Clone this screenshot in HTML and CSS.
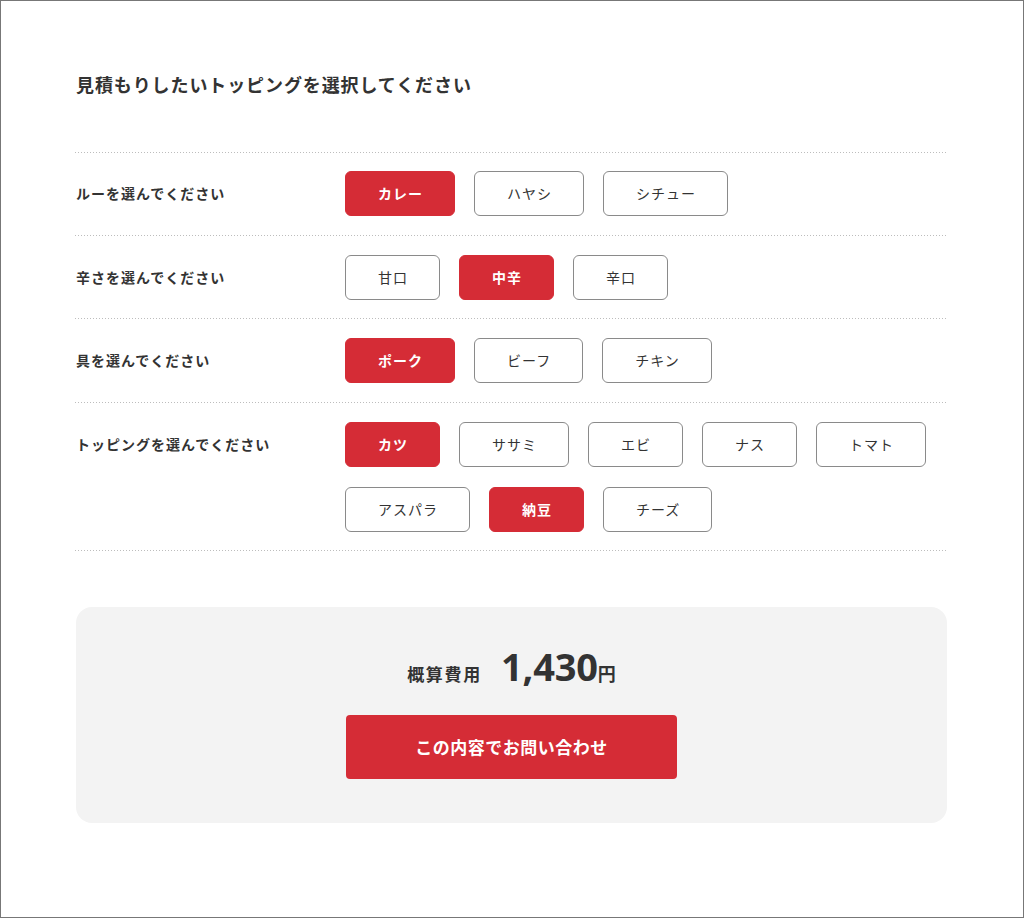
FILE: index.html
```html
<!DOCTYPE html>
<html lang="ja">
<head>
    <meta charset="UTF-8">
    <meta name="viewport" content="width=device-width, initial-scale=1.0">
    <title>トッピング見積もり</title>
    <link rel="stylesheet" href="styles.css">
</head>
<body>

    <div class="page">
        <div class="estimate">

            <h2 class="estimate-title">見積もりしたいトッピングを選択してください</h2>

            <div class="options">
                <div class="row">
                    <div class="row-label">ルーを選んでください</div>
                    <div class="choices">
                        <span class="choice is-on">カレー</span>
                        <span class="choice">ハヤシ</span>
                        <span class="choice">シチュー</span>
                    </div>
                </div>

                <div class="row">
                    <div class="row-label">辛さを選んでください</div>
                    <div class="choices">
                        <span class="choice">甘口</span>
                        <span class="choice is-on">中辛</span>
                        <span class="choice">辛口</span>
                    </div>
                </div>

                <div class="row">
                    <div class="row-label">具を選んでください</div>
                    <div class="choices">
                        <span class="choice is-on">ポーク</span>
                        <span class="choice">ビーフ</span>
                        <span class="choice">チキン</span>
                    </div>
                </div>

                <div class="row">
                    <div class="row-label">トッピングを選んでください</div>
                    <div class="choices">
                        <span class="choice is-on">カツ</span>
                        <span class="choice">ササミ</span>
                        <span class="choice">エビ</span>
                        <span class="choice">ナス</span>
                        <span class="choice">トマト</span>
                        <span class="choice">アスパラ</span>
                        <span class="choice is-on">納豆</span>
                        <span class="choice">チーズ</span>
                    </div>
                </div>
            </div>

            <div class="total">
                <p class="total-price">
                    <span class="total-label">概算費用</span>
                    <span class="total-num">1,430</span><span class="total-yen">円</span>
                </p>
                <a class="total-btn" href="#">この内容でお問い合わせ</a>
            </div>

        </div>
    </div>

</body>
</html>
```

FILE: styles.css
```css
*{
    margin : 0;
    padding: 0;
    box-sizing: border-box;
}

body{
    font-family: "Noto Sans CJK JP", "Noto Sans", sans-serif;
    color: #333;
    background: #fff;
}

/* 画面の外枠 */
.page{
    border: 1px solid #777;
    height: 918px;
}

.estimate{
    width: 872px;
    margin-left: 74px;
    padding-top: 70px;
}

.estimate-title{
    font-size: 18px;
    font-weight: 700;
    letter-spacing: 0.05em;
    line-height: 27px;
    padding-left: 1px;
    margin-bottom: 54px;
}

/* 点線の区切り */
.options{
    background-image: linear-gradient(to right, #bdbdbd 1px, transparent 1px);
    background-size: 3px 1px;
    background-repeat: repeat-x;
    width: 871px;
}

.row{
    display: flex;
    align-items: flex-start;
    padding: 19px 0 19.5px;
    background-image: linear-gradient(to right, #bdbdbd 1px, transparent 1px);
    background-size: 3px 1px;
    background-repeat: repeat-x;
    background-position: left bottom;
}

.row-label{
    width: 270px;
    flex-shrink: 0;
    padding-left: 1px;
    font-size: 14px;
    font-weight: 700;
    letter-spacing: 1px;
    line-height: 45px;
}

.choices{
    display: flex;
    flex-wrap: wrap;
    gap: 20px 19px;
    width: 600px;
}

.choice{
    display: inline-block;
    height: 45px;
    line-height: 43px;
    padding: 0 31px;
    border: 1px solid #8a8a8a;
    border-radius: 6px;
    font-size: 14px;
    letter-spacing: 1px;
    text-indent: 1px;
    text-align: center;
    color: #333;
    background: #fff;
}

.choice.is-on{
    background: #d52c36;
    border-color: #d52c36;
    color: #fff;
    font-weight: 700;
}

/* 見積もり結果 */
.total{
    margin-top: 56px;
    margin-left: 1px;
    width: 871px;
    background: #f3f3f3;
    border-radius: 16px;
    padding: 33px 0 44px;
    text-align: center;
}

.total-price{
    display: flex;
    justify-content: center;
    align-items: baseline;
    line-height: 52px;
}

.total-label{
    font-size: 17px;
    font-weight: 700;
    letter-spacing: 0.1em;
    margin-right: 19px;
}

.total-num{
    font-family: "Noto Sans", "Open Sans", sans-serif;
    font-size: 38px;
    font-weight: 700;
    letter-spacing: -0.005em;
}

.total-yen{
    font-size: 18px;
    font-weight: 700;
}

.total-btn{
    display: block;
    width: 331px;
    height: 64px;
    line-height: 64px;
    margin: 15px auto 0;
    background: #d52c36;
    border-radius: 4px;
    color: #fff;
    font-size: 17px;
    font-weight: 700;
    letter-spacing: 0.03em;
    text-decoration: none;
}
```
